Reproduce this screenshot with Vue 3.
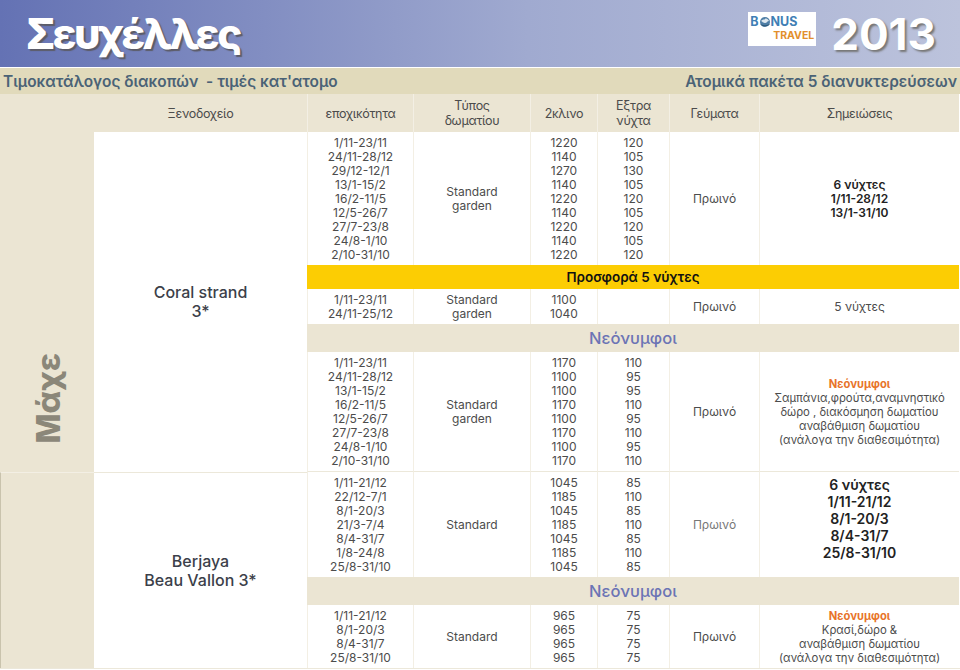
<script setup>
const block1 = {
  periods: ['1/11-23/11', '24/11-28/12', '29/12-12/1', '13/1-15/2', '16/2-11/5', '12/5-26/7', '27/7-23/8', '24/8-1/10', '2/10-31/10'],
  prices: ['1220', '1140', '1270', '1140', '1220', '1140', '1220', '1140', '1220'],
  extra: ['120', '105', '130', '105', '120', '105', '120', '105', '120'],
}
const block2 = {
  periods: ['1/11-23/11', '24/11-28/12', '13/1-15/2', '16/2-11/5', '12/5-26/7', '27/7-23/8', '24/8-1/10', '2/10-31/10'],
  prices: ['1170', '1100', '1100', '1170', '1100', '1170', '1100', '1170'],
  extra: ['110', '95', '95', '110', '95', '110', '95', '110'],
}
const block3 = {
  periods: ['1/11-21/12', '22/12-7/1', '8/1-20/3', '21/3-7/4', '8/4-31/7', '1/8-24/8', '25/8-31/10'],
  prices: ['1045', '1185', '1045', '1185', '1045', '1185', '1045'],
  extra: ['85', '110', '85', '110', '85', '110', '85'],
}
const block4 = {
  periods: ['1/11-21/12', '8/1-20/3', '8/4-31/7', '25/8-31/10'],
  prices: ['965', '965', '965', '965'],
  extra: ['75', '75', '75', '75'],
}
</script>

<template>
  <div class="page">
    <header class="banner">
      <h1 class="title">Σευχέλλες</h1>
      <div class="brand">
        <div class="logo">
          <span class="logo-top">B<svg class="globe" viewBox="0 0 12 12" aria-hidden="true"><circle cx="6" cy="6" r="5" fill="#4f7ea6" /><path d="M2 5c2-2 3-1 4-2s3 0 4 2c-2 0-2 2-4 2S4 6 2 5z" fill="#dfe8ef" /><path d="M1 8c2 3 8 3 10 0-3 1.500-7 1.500-10 0z" fill="#2d5878" /></svg>NUS</span>
          <span class="logo-bottom">TRAVEL</span>
        </div>
        <div class="year">2013</div>
      </div>
    </header>

    <div class="subbar">
      <span>Τιμοκατάλογος διακοπών &nbsp;- τιμές κατ'ατομο</span>
      <span>Ατομικά πακέτα 5 διανυκτερεύσεων</span>
    </div>

    <div class="grid">
      <!-- header -->
      <div class="head c-hotel">Ξενοδοχείο</div>
      <div class="head">εποχικότητα</div>
      <div class="head">Τύπος<br>δωματίου</div>
      <div class="head">2κλινο</div>
      <div class="head">Εξτρα<br>νύχτα</div>
      <div class="head">Γεύματα</div>
      <div class="head">Σημειώσεις</div>

      <div class="region">
        <span>Μάχε</span>
      </div>

      <div class="hotel hotel-1">Coral strand<br>3*</div>

      <!-- coral strand -->
      <div class="cell"><div v-for="p in block1.periods" :key="p">{{ p }}</div></div>
      <div class="cell">Standard<br>garden</div>
      <div class="cell"><div v-for="(p, i) in block1.prices" :key="i">{{ p }}</div></div>
      <div class="cell"><div v-for="(p, i) in block1.extra" :key="i">{{ p }}</div></div>
      <div class="cell">Πρωινό</div>
      <div class="cell"><b class="strong">6 νύχτες<br>1/11-28/12<br>13/1-31/10</b></div>

      <div class="band offer">Προσφορά 5 νύχτες</div>

      <div class="cell">1/11-23/11<br>24/11-25/12</div>
      <div class="cell">Standard<br>garden</div>
      <div class="cell">1100<br>1040</div>
      <div class="cell"></div>
      <div class="cell">Πρωινό</div>
      <div class="cell">5 νύχτες</div>

      <div class="band honey">Νεόνυμφοι</div>

      <div class="cell end"><div v-for="p in block2.periods" :key="p">{{ p }}</div></div>
      <div class="cell end">Standard<br>garden</div>
      <div class="cell end"><div v-for="(p, i) in block2.prices" :key="i">{{ p }}</div></div>
      <div class="cell end"><div v-for="(p, i) in block2.extra" :key="i">{{ p }}</div></div>
      <div class="cell end">Πρωινό</div>
      <div class="cell end note">
        <b class="orange">Νεόνυμφοι</b>
        <div>Σαμπάνια,φρούτα,αναμνηστικό<br>δώρο , διακόσμηση δωματίου<br>αναβάθμιση δωματίου<br>(ανάλογα την διαθεσιμότητα)</div>
      </div>

      <!-- berjaya -->
      <div class="region-2"></div>
      <div class="hotel hotel-2">Berjaya<br>Beau Vallon 3*</div>

      <div class="cell"><div v-for="p in block3.periods" :key="p">{{ p }}</div></div>
      <div class="cell">Standard</div>
      <div class="cell"><div v-for="(p, i) in block3.prices" :key="i">{{ p }}</div></div>
      <div class="cell"><div v-for="(p, i) in block3.extra" :key="i">{{ p }}</div></div>
      <div class="cell faint">Πρωινό</div>
      <div class="cell big"><b class="strong">6 νύχτες<br>1/11-21/12<br>8/1-20/3<br>8/4-31/7<br>25/8-31/10</b></div>

      <div class="band honey">Νεόνυμφοι</div>

      <div class="cell"><div v-for="p in block4.periods" :key="p">{{ p }}</div></div>
      <div class="cell">Standard</div>
      <div class="cell"><div v-for="(p, i) in block4.prices" :key="i">{{ p }}</div></div>
      <div class="cell"><div v-for="(p, i) in block4.extra" :key="i">{{ p }}</div></div>
      <div class="cell">Πρωινό</div>
      <div class="cell note">
        <b class="orange">Νεόνυμφοι</b>
        <div>Κρασί,δώρο &amp;<br>αναβάθμιση δωματίου<br>(ανάλογα την διαθεσιμότητα)</div>
      </div>
    </div>
  </div>
</template>

<style scoped>
.page {
  width: 960px;
  height: 670px;
  overflow: hidden;
  background: #fff;
  font-family: "Inter", "DejaVu Sans", sans-serif;
  color: #4c4c4c;
}

.banner {
  height: 67px;
  display: flex;
  justify-content: space-between;
  align-items: center;
  padding: 0 24px 0 26px;
  background: linear-gradient(90deg, #6472b4 0%, #a0aad0 55%, #bcc3dc 100%);
}

.title {
  margin: 0;
  font-size: 42px;
  letter-spacing: -2.5px;
  line-height: 1;
  font-weight: 800;
  color: #fff;
  text-shadow: 2px 2px 1px #5c5c68;
}

.brand {
  display: flex;
  align-items: center;
  gap: 15px;
}

.logo {
  width: 68px;
  height: 34px;
  margin-bottom: 9px;
  padding: 2px 2px;
  box-sizing: border-box;
  display: flex;
  flex-direction: column;
  background: #fff;
  font-weight: 700;
}

.logo-top {
  display: flex;
  align-items: center;
  font-size: 12.5px;
  line-height: 15px;
  color: #3f7fb5;
}

.globe {
  width: 12px;
  height: 12px;
}

.logo-bottom {
  font-size: 10.5px;
  line-height: 13px;
  text-align: right;
  color: #e28f2c;
}

.year {
  font-size: 44px;
  font-weight: 700;
  color: #fff;
  line-height: 1;
  text-shadow: 2px 2px 2px #777;
}

.subbar {
  height: 26px;
  margin-top: 1px;
  padding: 0 3px;
  display: flex;
  justify-content: space-between;
  align-items: center;
  background: #e1dabb;
  color: #4a6276;
  font-size: 15.4px;
  font-weight: 600;
}

.grid {
  display: grid;
  grid-template-columns: 94px 213px 106px 117px 67px 72px 90px 200px;
  grid-template-rows: 38px 133px 24px 35px 28px 120px 105px 28px 63px;
  border-bottom: 1px solid #ece8da;
}

.head {
  background: #ebe5d3;
  display: flex;
  align-items: center;
  justify-content: center;
  text-align: center;
  font-size: 12.5px;
  letter-spacing: -0.3px;
  line-height: 15px;
  border-left: 1px solid #f3efe4;
}

.head.c-hotel {
  grid-column: 1 / 3;
  padding-left: 94px;
  border-left: 0;
}

.region {
  grid-column: 1;
  grid-row: 2 / 7;
  background: #ebe5d3;
  display: flex;
  align-items: flex-end;
  justify-content: center;
  padding: 0 0 28px 4px;
}

.region span {
  writing-mode: vertical-rl;
  transform: rotate(180deg);
  font-size: 32px;
  line-height: 1;
  font-weight: 800;
  color: #8b8779;
}

.region-2 {
  grid-column: 1;
  grid-row: 7 / 10;
  background: #ebe5d3;
  border-left: 1px solid #c9c3ad;
  border-top: 1px solid #f3efe4;
}

.hotel {
  grid-column: 2;
  display: flex;
  align-items: center;
  justify-content: center;
  text-align: center;
  font-size: 16px;
  line-height: 19px;
  font-weight: 500;
  color: #3c3f4a;
}

.hotel-1 {
  grid-row: 2 / 7;
  align-items: flex-start;
  padding-top: 151px;
}

.hotel-2 {
  grid-row: 7 / 10;
  border-top: 1px solid #ece8da;
}

.cell {
  display: flex;
  flex-direction: column;
  align-items: center;
  justify-content: center;
  text-align: center;
  font-size: 12px;
  line-height: 14px;
  border-left: 1px solid #f3efe4;
}

.end {
  border-bottom: 1px solid #ece8da;
}

.faint {
  color: #777;
}

.note {
  font-size: 11.3px;
}

.strong {
  font-weight: 600;
  color: #222;
}

.big {
  font-size: 14px;
  line-height: 17px;
  padding-bottom: 12px;
}

.orange {
  font-size: 11.2px;
  font-weight: 700;
  color: #e8742a;
}

.band {
  grid-column: 3 / 9;
  display: flex;
  align-items: center;
  justify-content: center;
}

.offer {
  background: #fccd03;
  color: #111;
  font-size: 13.5px;
  font-weight: 600;
}

.honey {
  background: #ebe5d3;
  color: #6b74b5;
  font-size: 16.5px;
  font-weight: 500;
}
</style>
